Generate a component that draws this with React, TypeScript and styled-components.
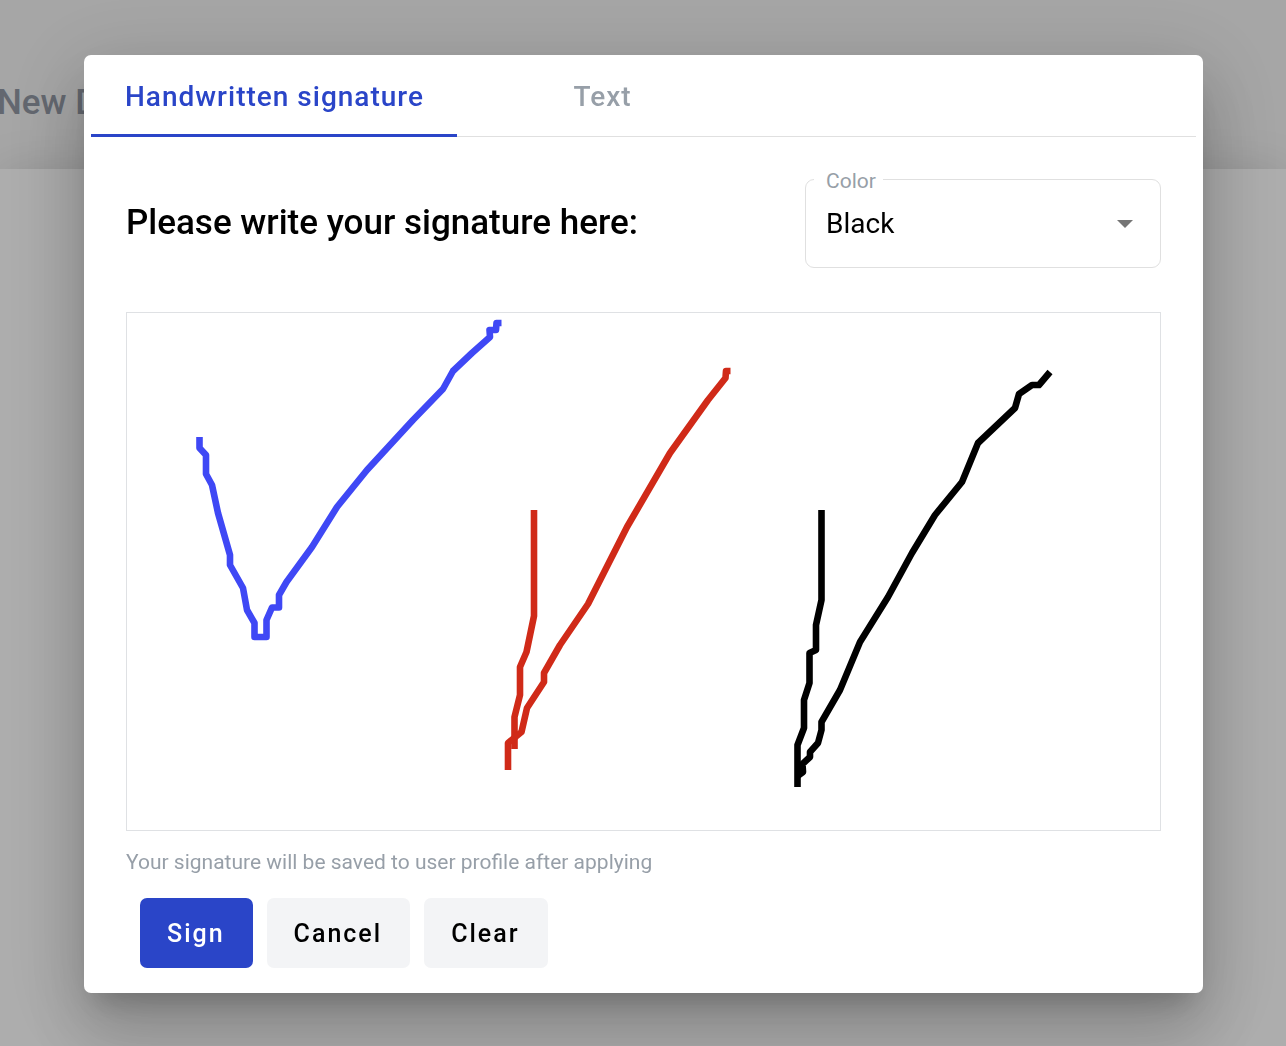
import React, { useState } from "react";
import styled, { createGlobalStyle } from "styled-components";

const GlobalStyle = createGlobalStyle`
  *, *::before, *::after { box-sizing: border-box; }
  body {
    margin: 0;
    background: #fff;
    color: #000;
    font-family: Roboto, "Liberation Sans", sans-serif;
  }
`;

const Screen = styled.div`
  display: flex;
  flex-direction: column;
  min-height: 100vh;
  overflow: hidden;
`;

const PageHeader = styled.header`
  display: flex;
  align-items: center;
  height: 169px;
  padding-top: 36px;
  background: #f5f5f5;
`;

const PageTitle = styled.h1`
  margin: 0 0 0 -3px;
  font-size: 35px;
  line-height: 40px;
  font-weight: 500;
  color: #9399a5;
`;

const PageBody = styled.main`
  flex: 1;
  background: #fff;
  box-shadow: 0 0 42px rgba(0, 0, 0, 0.12);
`;

const Backdrop = styled.div`
  position: fixed;
  inset: 0;
  overflow: auto;
  padding: 55px 83px 53px 84px;
  background: rgba(0, 0, 0, 0.32);
`;

const Dialog = styled.section`
  padding-bottom: 25px;
  border-radius: 7px;
  background: #fff;
  box-shadow:
    0 19px 26px -12px rgba(0, 0, 0, 0.2),
    0 42px 66px 5px rgba(0, 0, 0, 0.14),
    0 16px 80px 14px rgba(0, 0, 0, 0.12);
`;

const TabList = styled.div`
  display: flex;
  height: 82px;
  margin: 0 7px;
  border-bottom: 1px solid #e0e0e0;
`;

const Tab = styled.button<{ $active: boolean }>`
  min-width: 290px;
  height: 82px;
  padding: 4px 33px 0 34px;
  border: 0;
  border-bottom: 3px solid ${(p) => (p.$active ? "#2a45c8" : "transparent")};
  background: none;
  color: ${(p) => (p.$active ? "#2a45c8" : "#979fa8")};
  font: 500 28px/32px Roboto, "Liberation Sans", sans-serif;
  letter-spacing: 1px;
  cursor: pointer;
`;

const Content = styled.div`
  padding: 42px 42px 0;
`;

const TopRow = styled.div`
  display: flex;
  align-items: center;
  justify-content: space-between;
  gap: 24px;
  margin-bottom: 44px;
`;

const Prompt = styled.h2`
  margin: 0;
  padding-bottom: 2px;
  font-size: 35px;
  line-height: 40px;
  font-weight: 500;
`;

const Field = styled.div`
  position: relative;
  width: 356px;
`;

const FieldLabel = styled.label`
  position: absolute;
  top: -10px;
  left: 9px;
  padding: 0 7px 0 12px;
  background: #fff;
  color: #979fa8;
  font-size: 21px;
  line-height: 24px;
`;

const Select = styled.select`
  display: block;
  width: 100%;
  height: 89px;
  padding: 0 64px 0 20px;
  appearance: none;
  border: 1px solid #e0e0e0;
  border-radius: 9px;
  background: #fff;
  color: #000;
  font: 400 28px/32px Roboto, "Liberation Sans", sans-serif;
`;

const Arrow = styled.svg`
  position: absolute;
  top: 41px;
  right: 28px;
  width: 16px;
  height: 8px;
  fill: #757575;
  pointer-events: none;
`;

const Pad = styled.div`
  border: 1px solid #dfe1e4;
`;

const Drawing = styled.svg`
  display: block;
  width: 100%;
  height: auto;
  fill: none;
  stroke-width: 6.6;
  stroke-linejoin: round;
`;

const Note = styled.p`
  margin: 19px 0 24px;
  color: #979fa8;
  font-size: 21px;
  line-height: 24px;
`;

const Actions = styled.div`
  display: flex;
  gap: 14px;
  padding-left: 14px;
`;

const Button = styled.button<{ $primary?: boolean }>`
  height: 70px;
  padding: 2px 28px 0 27px;
  border: 0;
  border-radius: 7px;
  background: ${(p) => (p.$primary ? "#2a45c8" : "#f3f4f6")};
  color: ${(p) => (p.$primary ? "#fff" : "#000")};
  font: 500 25px/32px Roboto, "Liberation Sans", sans-serif;
  letter-spacing: 2px;
  cursor: pointer;
`;

const strokes = [
  {
    color: "#3f48f5",
    points:
      "199.5,437 199.5,448 206,455 206,474 212,485 218,513 230,555 230,565 243,588 247,610 254.5,623 254.5,637 266.5,637 266.5,620 272,607.5 279,607.5 279,595 286.5,582 312,547 337,507 367,470 413,420 443,389 453,371 472,353 490,337 489.5,330 496,330 496.5,323 501.5,323",
  },
  {
    color: "#d02a18",
    points: "534,510 534,616 526.5,652 520,667 520,695 514.5,717 514.5,749",
  },
  {
    color: "#d02a18",
    points:
      "508,770 508,743 521.5,732 527,708 544,682 544,673 560,645 588,604 627,527 670,453 708,400 725.5,378 726,371 730.5,371",
  },
  {
    color: "#000",
    points:
      "821.5,510 821.5,600 816,625 816,650 809.5,653 809.5,683 804,700 804,728 797.5,745 797.5,787",
  },
  {
    color: "#000",
    points:
      "797.5,776 803,772 802.5,764 810,757 810,752 818,743 821.5,730 821.5,722 840,690 860,642 888,597 912,553 935,515 962,482 978,443 1015,408 1019,394 1032,385 1039,385 1050,372",
  },
];

const tabs = ["Handwritten signature", "Text"];

export default function App() {
  const [active, setActive] = useState(0);
  const [color, setColor] = useState("Black");
  const [drawn, setDrawn] = useState(strokes);

  return (
    <>
      <GlobalStyle />
      <Screen>
        <PageHeader>
          <PageTitle>New D</PageTitle>
        </PageHeader>
        <PageBody />
      </Screen>
      <Backdrop>
        <Dialog role="dialog" aria-modal="true" aria-labelledby="prompt">
          <TabList role="tablist">
            {tabs.map((name, i) => (
              <Tab
                key={name}
                type="button"
                role="tab"
                aria-selected={i === active}
                $active={i === active}
                onClick={() => setActive(i)}
              >
                {name}
              </Tab>
            ))}
          </TabList>
          <Content>
            <TopRow>
              <Prompt id="prompt">Please write your signature here:</Prompt>
              <Field>
                <Select id="color" value={color} onChange={(e) => setColor(e.target.value)}>
                  <option>Black</option>
                  <option>Blue</option>
                  <option>Red</option>
                </Select>
                <FieldLabel htmlFor="color">Color</FieldLabel>
                <Arrow viewBox="0 0 16 8" aria-hidden="true">
                  <path d="M0 0h16l-8 8z" />
                </Arrow>
              </Field>
            </TopRow>
            <Pad>
              <Drawing viewBox="127 313 1033 517" role="img" aria-label="Signature">
                {drawn.map((s) => (
                  <polyline key={s.points} points={s.points} stroke={s.color} />
                ))}
              </Drawing>
            </Pad>
            <Note>Your signature will be saved to user profile after applying</Note>
            <Actions>
              <Button type="button" $primary>Sign</Button>
              <Button type="button">Cancel</Button>
              <Button type="button" onClick={() => setDrawn([])}>Clear</Button>
            </Actions>
          </Content>
        </Dialog>
      </Backdrop>
    </>
  );
}
